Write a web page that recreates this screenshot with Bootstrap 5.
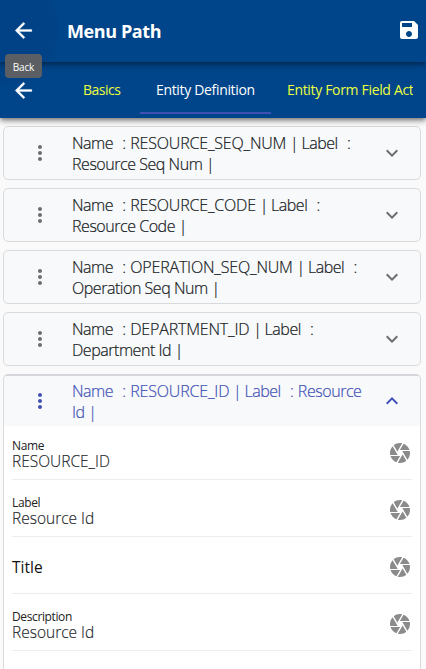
<!DOCTYPE html>
<html lang="en">
<head>
<meta charset="utf-8">
<meta name="viewport" content="width=device-width, initial-scale=1">
<title>Menu Path</title>
<link href="https://cdn.jsdelivr.net/npm/bootstrap@5.3.0/dist/css/bootstrap.min.css" rel="stylesheet">
<style>
body{font-family:"Open Sans","Noto Sans",sans-serif;font-size:16px;background:#fafafa;height:669px;overflow:hidden;color:#212529}
svg{display:block;flex:none;fill:currentColor}
.bar{background:#00458a;color:#fff}
.bar-top{height:62px;padding:0 5px 2px 11px;z-index:2;box-shadow:0 2px 4px -1px rgba(0,0,0,.3),0 4px 5px rgba(0,0,0,.16),0 1px 10px rgba(0,0,0,.12)}
.bar-tabs{height:56px;z-index:1;padding:0 13px 0 11px;box-shadow:0 2px 4px -1px rgba(0,0,0,.4),0 4px 5px rgba(0,0,0,.2),0 1px 10px rgba(0,0,0,.12)}
.page-title{font-size:18px;font-weight:700;margin-left:31px;padding-top:3px;letter-spacing:-.4px}
.halo{left:-55px;top:-28px;width:113px;height:113px;border-radius:50%;background:rgba(0,0,0,.035)}
.tabs{margin-left:27px;height:48px;align-self:center}
.tab-item{padding:0 16px;font-size:14px;font-weight:400;color:#ecff3d;white-space:nowrap;line-height:48px;border-bottom:2px solid transparent;height:48px;letter-spacing:-.33px}
.tab-item.first{padding:0 0 0 20px;width:77px;flex:none;letter-spacing:-.5px}
.tab-item.on{color:#fff;border-color:#3f51b5;width:131px;flex:none}
.hint{left:5px;top:54px;width:37px;height:24px;border-radius:4px;background:#616161ee;font-size:10px;line-height:27px;z-index:3;color:#fff;letter-spacing:-.2px}
.panels{padding:8px 5px 0 3px;gap:8px}
.panel{border:1px solid #d9dadd;border-radius:5px;background:#f8f9fb}
.panel-head{height:52px;padding:0 16px 0 24px;color:#16191c;font-weight:300;-webkit-text-stroke:.2px currentColor}
.panel-head .copy{margin-left:20px;line-height:21px;white-space:pre;padding-top:2px}
.panel-head .gray{color:#6c6e70}
.panel.open{border-top:2px solid #d6d7da;border-bottom:0;border-radius:5px 5px 0 0;height:300px;background:#fff;overflow:hidden}
.open .panel-head{background:#f8f9fb;height:50px}
.open .panel-head,.open .panel-head .gray{color:#3f51b5}
.s1,.s2{letter-spacing:-.46px}
.s1{word-spacing:.9px}
.ident{letter-spacing:-.18px}
.sep{letter-spacing:-1.2px}
.fields{padding:0 8px}
.field{height:57px;border-bottom:1px solid #ececec;padding-top:3px}
.field:first-child{height:54px;padding-top:0}
.pair{padding-top:3px}
.cap{font-size:12px;line-height:13px;color:#222;letter-spacing:-.38px;font-weight:400}
.val{font-size:15.5px;line-height:16px;font-weight:300;letter-spacing:0;-webkit-text-stroke:.15px currentColor;padding-top:1px}
.val.heading{font-weight:400;color:#111;-webkit-text-stroke:0}
.lens{color:#8b8b8b}
</style>
</head>
<body>
<header class="bar bar-top position-relative d-flex align-items-center">
  <div class="halo position-absolute"></div>
  <svg class="position-relative" width="25" height="25" viewBox="0 0 24 24"><path d="M20 11H7.83l5.59-5.59L12 4l-8 8 8 8 1.41-1.41L7.83 13H20v-2z" stroke="#fff" stroke-width=".3"/></svg>
  <div class="page-title me-auto"><span>Menu Path</span></div>
  <svg width="24" height="24" viewBox="0 0 24 24"><path d="M17 3H5c-1.11 0-2 .9-2 2v14c0 1.1.89 2 2 2h14c1.1 0 2-.9 2-2V7l-4-4zm-5 16c-1.66 0-3-1.34-3-3s1.34-3 3-3 3 1.34 3 3-1.34 3-3 3zm3-10H5V5h10v4z"/></svg>
  <div class="hint position-absolute text-center">Back</div>
</header>
<nav class="bar bar-tabs position-relative d-flex align-items-center">
  <svg width="25" height="25" viewBox="0 0 24 24"><path d="M20 11H7.83l5.59-5.59L12 4l-8 8 8 8 1.41-1.41L7.83 13H20v-2z" stroke="#fff" stroke-width=".3"/></svg>
  <div class="tabs d-flex overflow-hidden flex-grow-1">
    <div class="tab-item first">Basics</div>
    <div class="tab-item on">Entity Definition</div>
    <div class="tab-item">Entity Form Field Actions</div>
  </div>
</nav>
<svg class="d-none">
  <symbol id="dots" viewBox="0 0 24 24"><path d="M12 8c1.1 0 2-.9 2-2s-.9-2-2-2-2 .9-2 2 .9 2 2 2zm0 2c-1.1 0-2 .9-2 2s.9 2 2 2 2-.9 2-2-.9-2-2-2zm0 6c-1.1 0-2 .9-2 2s.9 2 2 2 2-.9 2-2-.9-2-2-2z"/></symbol>
  <symbol id="down" viewBox="0 0 24 24"><path d="M16.59 8.59L12 13.17 7.41 8.59 6 10l6 6 6-6z"/></symbol>
  <symbol id="up" viewBox="0 0 24 24"><path d="M12 8l-6 6 1.41 1.41L12 10.83l4.59 4.58L18 14z"/></symbol>
  <symbol id="lens" viewBox="0 0 24 24"><path d="M9.4 10.5l4.77-8.26C13.47 2.09 12.75 2 12 2c-2.4 0-4.6.85-6.32 2.25l3.66 6.35.06-.1zM21.54 9c-.92-2.92-3.15-5.26-6-6.34L11.88 9h9.66zm.26 1h-7.49l.29.5 4.76 8.25C21 16.97 22 14.61 22 12c0-.69-.07-1.35-.2-2zM8.54 12l-3.9-6.75C3.01 7.03 2 9.39 2 12c0 .69.07 1.35.2 2h7.49l-1.15-2zm-6.08 3c.92 2.92 3.15 5.26 6 6.34L12.12 15H2.46zm11.27 0l-3.9 6.76c.7.15 1.42.24 2.17.24 2.4 0 4.6-.85 6.32-2.25l-3.66-6.35-.93 1.6z"/></symbol>
</svg>
<main class="panels d-flex flex-column">
  <section class="panel"><div class="panel-head d-flex align-items-center"><svg class="gray" width="24" height="24"><use href="#dots"/></svg><div class="copy me-auto"><span class="s1">Name  : <span class="ident">RESOURCE_SEQ_NUM</span><span class="sep"> | </span>Label  :</span><br><span class="s2">Resource Seq Num |</span></div><svg class="gray" width="24" height="24"><use href="#down"/></svg></div></section>
  <section class="panel"><div class="panel-head d-flex align-items-center"><svg class="gray" width="24" height="24"><use href="#dots"/></svg><div class="copy me-auto"><span class="s1">Name  : <span class="ident">RESOURCE_CODE</span><span class="sep"> | </span>Label  :</span><br><span class="s2">Resource Code |</span></div><svg class="gray" width="24" height="24"><use href="#down"/></svg></div></section>
  <section class="panel"><div class="panel-head d-flex align-items-center"><svg class="gray" width="24" height="24"><use href="#dots"/></svg><div class="copy me-auto"><span class="s1">Name  : <span class="ident">OPERATION_SEQ_NUM</span><span class="sep"> | </span>Label  :</span><br><span class="s2">Operation Seq Num |</span></div><svg class="gray" width="24" height="24"><use href="#down"/></svg></div></section>
  <section class="panel"><div class="panel-head d-flex align-items-center"><svg class="gray" width="24" height="24"><use href="#dots"/></svg><div class="copy me-auto"><span class="s1">Name  : <span class="ident">DEPARTMENT_ID</span><span class="sep"> | </span>Label  :</span><br><span class="s2">Department Id |</span></div><svg class="gray" width="24" height="24"><use href="#down"/></svg></div></section>
  <section class="panel open"><div class="panel-head d-flex align-items-center"><svg class="gray" width="24" height="24"><use href="#dots"/></svg><div class="copy me-auto"><span class="s1">Name  : <span class="ident">RESOURCE_ID</span><span class="sep"> | </span>Label  : Resource</span><br><span class="s2">Id |</span></div><svg class="gray" width="24" height="24"><use href="#up"/></svg></div>
    <div class="fields">
      <div class="field d-flex align-items-center"><div class="pair me-auto"><div class="cap">Name</div><div class="val">RESOURCE_ID</div></div><svg class="lens" width="24" height="24"><use href="#lens"/></svg></div>
      <div class="field d-flex align-items-center"><div class="pair me-auto"><div class="cap">Label</div><div class="val">Resource Id</div></div><svg class="lens" width="24" height="24"><use href="#lens"/></svg></div>
      <div class="field d-flex align-items-center"><div class="me-auto"><div class="val heading">Title</div></div><svg class="lens" width="24" height="24"><use href="#lens"/></svg></div>
      <div class="field d-flex align-items-center"><div class="pair me-auto"><div class="cap">Description</div><div class="val">Resource Id</div></div><svg class="lens" width="24" height="24"><use href="#lens"/></svg></div>
    </div>
  </section>
</main>
<script src="https://cdn.jsdelivr.net/npm/bootstrap@5.3.0/dist/js/bootstrap.bundle.min.js"></script>
</body>
</html>
